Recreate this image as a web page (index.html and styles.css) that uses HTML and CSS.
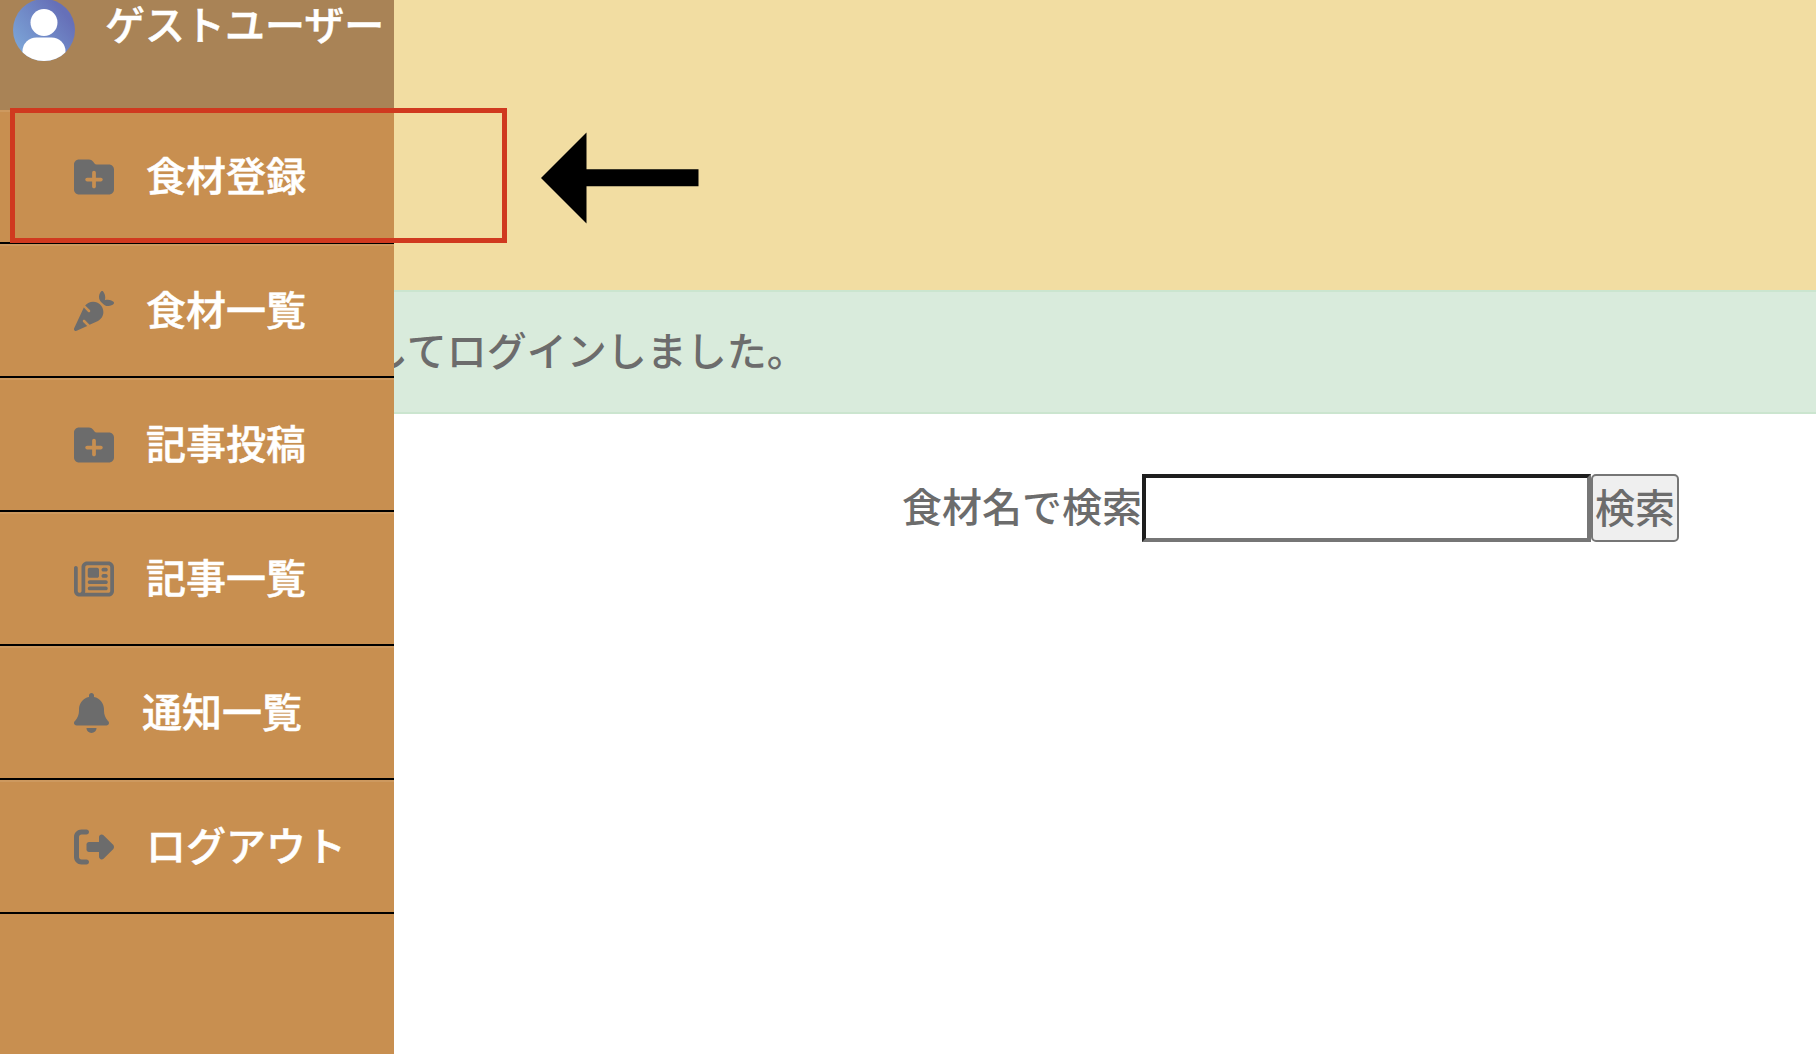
FILE: index.html
```
<!DOCTYPE html>
<html lang="ja">
<head>
<meta charset="utf-8">
<title>食材管理</title>
<link rel="stylesheet" href="styles.css">
</head>
<body>
<svg width="0" height="0" class="defs" aria-hidden="true">
  <symbol id="folder-plus" viewBox="0 0 512 512"><path d="M512 416c0 35.300-28.700 64-64 64H64c-35.300 0-64-28.700-64-64V96C0 60.700 28.700 32 64 32H192c20.100 0 39.100 9.500 51.200 25.600l19.200 25.600c6 8.100 15.500 12.800 25.600 12.800H448c35.300 0 64 28.700 64 64V416zM232 376c0 13.300 10.700 24 24 24s24-10.700 24-24V312h64c13.300 0 24-10.700 24-24s-10.700-24-24-24H280V200c0-13.300-10.700-24-24-24s-24 10.700-24 24v64H168c-13.300 0-24 10.700-24 24s10.700 24 24 24h64v64z"/></symbol>
</svg>
<div class="page">
  <nav class="sidebar">
    <div class="user">
      <svg class="avatar" viewBox="0 0 62 62">
        <defs>
          <linearGradient id="sky" x1="0.1" y1="0.8" x2="0.8" y2="0.2"><stop offset="0" stop-color="#7ba3d6"/><stop offset="1" stop-color="#6670b8"/></linearGradient>
          <clipPath id="round"><circle cx="31" cy="31" r="31"/></clipPath>
        </defs>
        <g clip-path="url(#round)">
          <rect width="62" height="62" fill="url(#sky)"/>
          <circle cx="31" cy="23.500" r="13.500" fill="#fff"/>
          <rect x="9.500" y="38.500" width="43" height="34" rx="14" fill="#fff"/>
        </g>
      </svg>
      <span class="user-name">ゲストユーザー</span>
    </div>
    <a class="item"><svg class="icon"><use href="#folder-plus"/></svg><span class="label">食材登録</span></a>
    <a class="item"><svg class="icon" viewBox="0 0 512 512"><path d="M346.700 6C337.600 17 320 42.300 320 72c0 40 15.300 55.300 40 80s40 40 80 40c29.700 0 55-17.600 66-26.700c4-3.300 6-8.200 6-13.300s-2-10-6-13.200c-11.400-9.100-38.300-26.800-74-26.800c-32 0-40 8-40 8s8-8 8-40c0-35.700-17.700-62.600-26.800-74C370 2 365.100 0 360 0s-10 2-13.300 6zM244.600 136c-40 0-77.100 18.100-101.700 48.200l60.500 60.500c6.200 6.200 6.200 16.400 0 22.600s-16.400 6.200-22.600 0l-55.300-55.300 0 .1L2.200 477.900C-2 487-.1 497.800 7 505s17.900 9 27.100 4.800l134.700-62.400-52.100-52.100c-6.200-6.200-6.200-16.400 0-22.600s16.400-6.200 22.600 0l60.100 60.100 100.700-46.700C346.600 364.900 376 319 376 268.600C376 195.600 317.600 136 244.600 136z"/></svg><span class="label">食材一覧</span></a>
    <a class="item"><svg class="icon"><use href="#folder-plus"/></svg><span class="label">記事投稿</span></a>
    <a class="item"><svg class="icon" viewBox="0 0 512 512"><path d="M168 80c-13.300 0-24 10.700-24 24V408c0 8.400-1.400 16.500-4.100 24H440c13.300 0 24-10.700 24-24V104c0-13.300-10.700-24-24-24H168zM72 480c-39.800 0-72-32.200-72-72V112C0 98.700 10.700 88 24 88s24 10.700 24 24V408c0 13.300 10.700 24 24 24s24-10.700 24-24V104c0-39.800 32.200-72 72-72H440c39.800 0 72 32.200 72 72V408c0 39.800-32.200 72-72 72H72zM176 136c0-13.300 10.700-24 24-24h96c13.300 0 24 10.700 24 24v80c0 13.300-10.700 24-24 24H200c-13.300 0-24-10.700-24-24V136zm200-24h32c13.300 0 24 10.700 24 24s-10.700 24-24 24H376c-13.300 0-24-10.700-24-24s10.700-24 24-24zm0 80h32c13.300 0 24 10.700 24 24s-10.700 24-24 24H376c-13.300 0-24-10.700-24-24s10.700-24 24-24zM200 272H408c13.300 0 24 10.700 24 24s-10.700 24-24 24H200c-13.300 0-24-10.700-24-24s10.700-24 24-24zm0 80H408c13.300 0 24 10.700 24 24s-10.700 24-24 24H200c-13.300 0-24-10.700-24-24s10.700-24 24-24z"/></svg><span class="label">記事一覧</span></a>
    <a class="item"><svg class="icon icon-bell" viewBox="0 0 448 512"><path d="M224 0c-17.700 0-32 14.300-32 32V51.200C119 66 64 130.600 64 208v18.800c0 47-17.300 92.400-48.500 127.600l-7.400 8.300c-8.400 9.400-10.400 22.900-5.300 34.400S19.400 416 32 416H416c12.600 0 24-7.400 29.200-18.900s3.100-25-5.300-34.400l-7.400-8.300C401.300 319.200 384 273.900 384 226.800V208c0-77.400-55-142-128-156.800V32c0-17.700-14.300-32-32-32zm45.300 493.300c12-12 18.700-28.300 18.700-45.300H224 160c0 17 6.700 33.300 18.700 45.300s28.300 18.700 45.300 18.700s33.300-6.700 45.300-18.700z"/></svg><span class="label">通知一覧</span></a>
    <a class="item"><svg class="icon" viewBox="0 0 512 512"><path d="M377.900 105.900L500.700 228.700c7.200 7.200 11.300 17.100 11.300 27.300s-4.100 20.100-11.300 27.300L377.900 406.100c-6.400 6.400-15 9.900-24 9.900c-18.700 0-33.900-15.200-33.900-33.900l0-62.100-128 0c-17.700 0-32-14.300-32-32l0-64c0-17.700 14.300-32 32-32l128 0 0-62.100c0-18.700 15.200-33.900 33.900-33.900c9 0 17.600 3.600 24 9.900zM160 96L96 96c-17.700 0-32 14.300-32 32l0 256c0 17.700 14.300 32 32 32l64 0c17.700 0 32 14.300 32 32s-14.300 32-32 32l-64 0c-53 0-96-43-96-96L0 128C0 75 43 32 96 32l64 0c17.700 0 32 14.300 32 32s-14.300 32-32 32z"/></svg><span class="label">ログアウト</span></a>
  </nav>
  <header class="banner"></header>
  <div class="alert">してログインしました。</div>
  <form class="search">
    <label class="label" for="q">食材名で検索</label><input id="q" type="text"><button type="button">検索</button>
  </form>
  <div class="callout"></div>
  <svg class="arrow" viewBox="0 0 158 92"><path d="M0 46L45.500 0.500V37.300H157.500V54.300H45.500V91.500z"/></svg>
</div>
</body>
</html>
```
FILE: styles.css
```
* { box-sizing: border-box; }

body {
  margin: 0;
  background: #fff;
  color: #6c6c6c;
  font: 500 40px/60px "Noto Sans CJK JP", sans-serif;
}

.defs { position: absolute; }

.page {
  position: relative;
  height: 1054px;
  overflow: hidden;
}

/* Drawer lying over the page */
.sidebar {
  position: absolute;
  inset: 0 auto 0 0;
  z-index: 1;
  width: 394px;
  background: #c88f50;
  color: #fff;
  -webkit-text-stroke: 0.5px currentColor;
}

.user {
  display: flex;
  align-items: flex-start;
  height: 110px;
  padding-left: 13px;
  background: #a98356;
}

.avatar {
  width: 62px;
  height: 62px;
  margin-top: -1px;
  margin-right: 30px;
}

.user-name {
  line-height: 46px;
  white-space: nowrap;
}

.item {
  display: flex;
  align-items: center;
  height: 134px;
  padding-left: 74px;
  border-top: 2px solid #cd995f;
  border-bottom: 2px solid #000;
  white-space: nowrap;
}

.label { padding-bottom: 6px; }

.icon {
  width: 40px;
  height: 40px;
  margin-right: 32px;
  fill: #6c6c6c;
}

.icon-bell {
  width: 35px;
  margin-right: 33px;
}

.banner {
  height: 290px;
  background: #f2dda2;
}

.alert {
  height: 124px;
  padding: 27px 0 0 368px;
  border: solid #cbe5cf;
  border-width: 2px 0;
  background: #d9ebdc;
}

.search {
  display: flex;
  justify-content: flex-end;
  align-items: center;
  padding: 60px 137px 0 0;
}

.search input {
  width: 449px;
  height: 68px;
  border: 4px solid;
  border-color: #1e1e1e #767676 #767676 #1e1e1e;
  background: #fff;
  font: inherit;
}

.search button {
  width: 88px;
  height: 68px;
  padding: 0 0 6px;
  border: 2px solid #767676;
  border-radius: 5px;
  background: #efefef;
  color: inherit;
  font: inherit;
}

.callout {
  position: absolute;
  left: 10px;
  top: 108px;
  z-index: 2;
  width: 497px;
  height: 135px;
  border: 5px solid #d0391f;
}

.arrow {
  position: absolute;
  left: 541px;
  top: 132px;
  width: 158px;
  height: 92px;
}
```
